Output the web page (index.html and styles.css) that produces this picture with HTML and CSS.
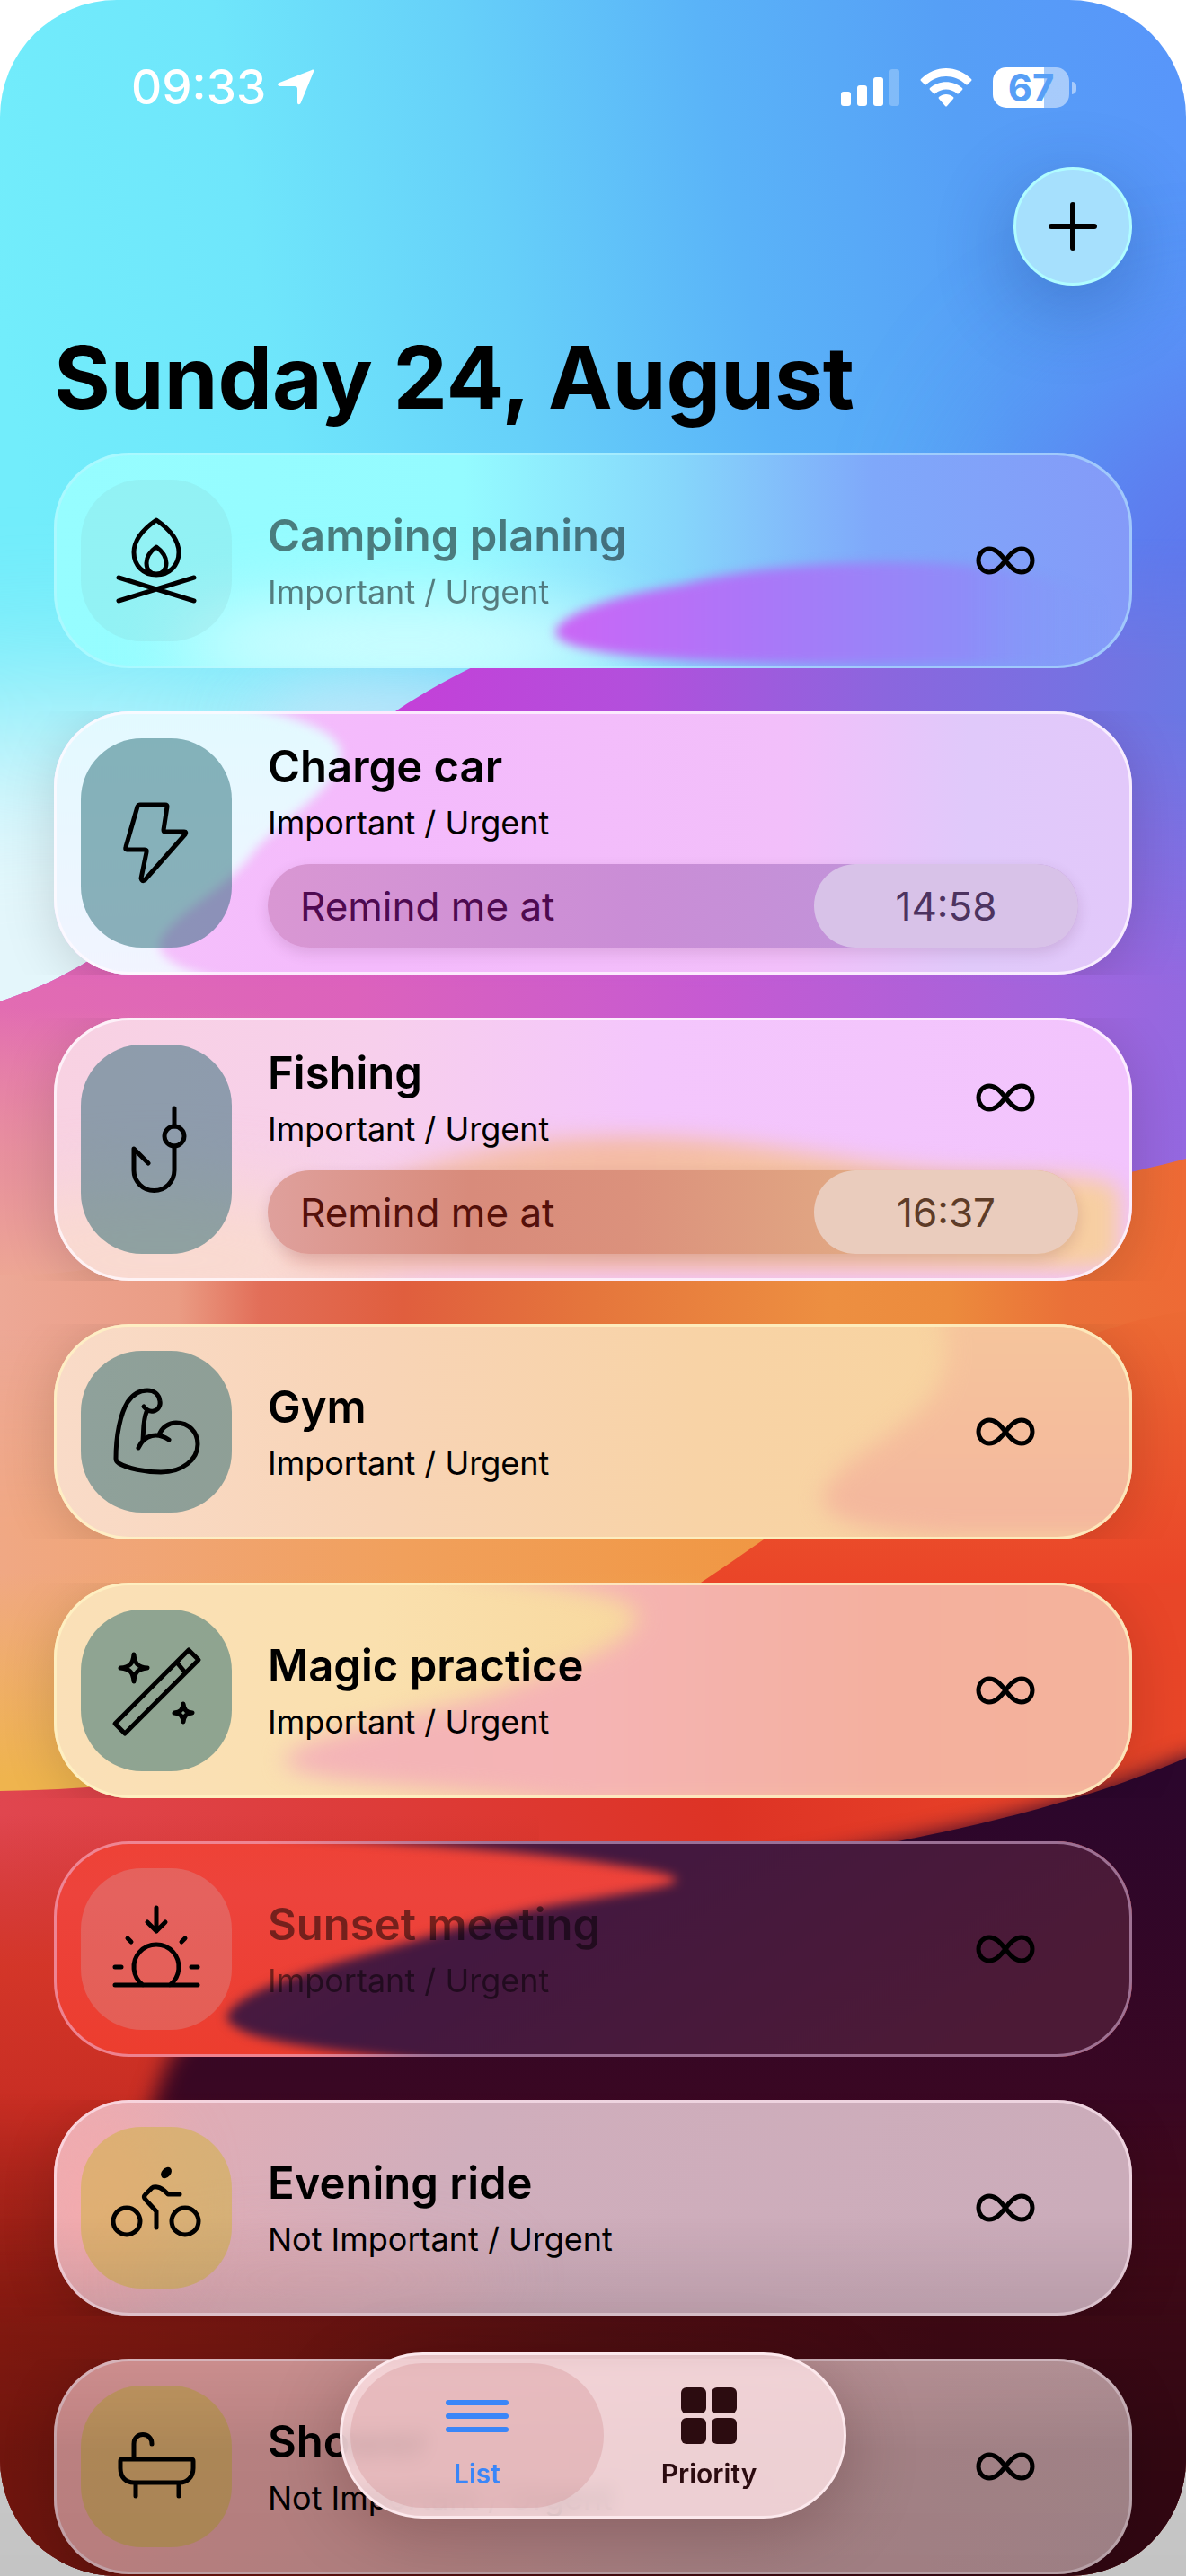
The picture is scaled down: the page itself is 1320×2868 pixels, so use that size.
FILE: index.html
```html
<!DOCTYPE html>
<html lang="en">
<head>
<meta charset="utf-8">
<meta name="viewport" content="width=device-width, initial-scale=1">
<title>Sunday 24, August</title>
<link rel="stylesheet" href="styles.css">
</head>
<body>
<svg width="0" height="0" class="defs" aria-hidden="true">
  <defs>
    <symbol id="infinity" viewBox="0 0 66 32">
      <path d="M33 16C27 8 22 3 15 3C8 3 3 9 3 16S8 29 15 29C22 29 27 24 33 16S44 3 51 3C58 3 63 9 63 16S58 29 51 29C44 29 39 24 33 16Z"/>
    </symbol>
    <filter id="soft" x="-20%" y="-40%" width="140%" height="180%" color-interpolation-filters="sRGB"><feGaussianBlur stdDeviation="6"/></filter>
    <filter id="softer" x="-20%" y="-40%" width="140%" height="180%" color-interpolation-filters="sRGB"><feGaussianBlur stdDeviation="12"/></filter>
    <filter id="haze" x="-100%" y="-200%" width="300%" height="500%" color-interpolation-filters="sRGB"><feGaussianBlur stdDeviation="40"/></filter>
    <filter id="mist" x="-100%" y="-100%" width="300%" height="300%" color-interpolation-filters="sRGB"><feGaussianBlur stdDeviation="100"/></filter>
  </defs>
</svg>

<div class="screen">
  <svg class="wallpaper" viewBox="0 0 1320 2868" preserveAspectRatio="none" aria-hidden="true">
    <defs>
      <linearGradient id="sky" gradientUnits="userSpaceOnUse" x1="0" y1="380" x2="1320" y2="160">
        <stop offset="0" stop-color="#72edfb"/><stop offset=".22" stop-color="#6fe6fb"/><stop offset=".42" stop-color="#66d0f9"/>
        <stop offset=".62" stop-color="#5ab3f8"/><stop offset=".82" stop-color="#569ff6"/><stop offset="1" stop-color="#5896fa"/>
      </linearGradient>
      <linearGradient id="wave1" gradientUnits="userSpaceOnUse" x1="440" y1="760" x2="1320" y2="760">
        <stop offset="0" stop-color="#c440d8"/><stop offset=".3" stop-color="#b34fdc"/><stop offset=".62" stop-color="#8b66de"/><stop offset="1" stop-color="#6a78e4"/>
      </linearGradient>
      <linearGradient id="wave1low" gradientUnits="userSpaceOnUse" x1="0" y1="1100" x2="1320" y2="1100">
        <stop offset="0" stop-color="#e26cb2"/><stop offset=".3" stop-color="#dc62bc"/><stop offset=".6" stop-color="#c65ad2"/><stop offset="1" stop-color="#9468e0"/>
      </linearGradient>
      <linearGradient id="fadeIn1" gradientUnits="userSpaceOnUse" x1="0" y1="790" x2="0" y2="1100">
        <stop offset="0" stop-color="#000"/><stop offset="1" stop-color="#fff"/>
      </linearGradient>
      <mask id="m1"><rect width="1320" height="2868" fill="url(#fadeIn1)"/></mask>
      <linearGradient id="fadeTop" gradientUnits="userSpaceOnUse" x1="0" y1="600" x2="0" y2="735">
        <stop offset="0" stop-color="#000"/><stop offset="1" stop-color="#fff"/>
      </linearGradient>
      <mask id="m0"><rect width="1320" height="2868" fill="url(#fadeTop)"/></mask>
      <linearGradient id="peach" gradientUnits="userSpaceOnUse" x1="0" y1="1120" x2="0" y2="1420">
        <stop offset="0" stop-color="#eda694" stop-opacity="0"/><stop offset=".6" stop-color="#e8969a" stop-opacity=".9"/><stop offset="1" stop-color="#eda694"/>
      </linearGradient>
      <linearGradient id="wave2" gradientUnits="userSpaceOnUse" x1="0" y1="1450" x2="1320" y2="1450">
        <stop offset="0" stop-color="#eda896"/><stop offset=".15" stop-color="#ea9c84"/><stop offset=".22" stop-color="#e26e58"/><stop offset=".34" stop-color="#e05e3e"/>
        <stop offset=".5" stop-color="#e5763c"/><stop offset=".7" stop-color="#ed8f41"/><stop offset=".8" stop-color="#ec8b3d"/><stop offset=".9" stop-color="#ea7038"/><stop offset="1" stop-color="#ee6a35"/>
      </linearGradient>
      <linearGradient id="wave2low" gradientUnits="userSpaceOnUse" x1="0" y1="1740" x2="900" y2="1740">
        <stop offset="0" stop-color="#f0a884"/><stop offset=".5" stop-color="#f1a05c"/><stop offset="1" stop-color="#f09640"/>
      </linearGradient>
      <linearGradient id="fadeIn2" gradientUnits="userSpaceOnUse" x1="0" y1="1480" x2="0" y2="1700">
        <stop offset="0" stop-color="#000"/><stop offset="1" stop-color="#fff"/>
      </linearGradient>
      <mask id="m2"><rect width="1320" height="2868" fill="url(#fadeIn2)"/></mask>
      <linearGradient id="gold" gradientUnits="userSpaceOnUse" x1="0" y1="1750" x2="0" y2="1980">
        <stop offset="0" stop-color="#efb44e" stop-opacity="0"/><stop offset="1" stop-color="#efb44e"/>
      </linearGradient>
      <linearGradient id="red" gradientUnits="userSpaceOnUse" x1="0" y1="2020" x2="1320" y2="1850">
        <stop offset="0" stop-color="#e0464f"/><stop offset=".3" stop-color="#dd3c3a"/><stop offset=".6" stop-color="#dd3325"/><stop offset=".85" stop-color="#e84228"/><stop offset="1" stop-color="#e84628"/>
      </linearGradient>
      <linearGradient id="redEdge" gradientUnits="userSpaceOnUse" x1="0" y1="1460" x2="0" y2="1760">
        <stop offset="0" stop-color="#ec6a34"/><stop offset="1" stop-color="#ea4528"/>
      </linearGradient>
      <linearGradient id="redlow" gradientUnits="userSpaceOnUse" x1="0" y1="2020" x2="0" y2="2868">
        <stop offset="0" stop-color="#c42c20" stop-opacity="0"/><stop offset=".2" stop-color="#d23424"/><stop offset=".4" stop-color="#c42a1e"/><stop offset=".7" stop-color="#901c12"/><stop offset="1" stop-color="#8c1c12"/>
      </linearGradient>
      <linearGradient id="night" gradientUnits="userSpaceOnUse" x1="0" y1="1980" x2="0" y2="2600">
        <stop offset="0" stop-color="#2b062c"/><stop offset=".6" stop-color="#3a0722"/><stop offset="1" stop-color="#420a18"/>
      </linearGradient>
      <linearGradient id="ember" gradientUnits="userSpaceOnUse" x1="0" y1="2600" x2="1320" y2="2600">
        <stop offset="0" stop-color="#901c12"/><stop offset=".2" stop-color="#7c1812"/><stop offset=".5" stop-color="#581014"/><stop offset=".8" stop-color="#420a16"/><stop offset="1" stop-color="#400a18"/>
      </linearGradient>
      <linearGradient id="fadeIn3" gradientUnits="userSpaceOnUse" x1="0" y1="2330" x2="0" y2="2590">
        <stop offset="0" stop-color="#000"/><stop offset="1" stop-color="#fff"/>
      </linearGradient>
      <mask id="m3"><rect width="1320" height="2868" fill="url(#fadeIn3)"/></mask>
    </defs>
    <rect width="1320" height="1400" fill="url(#sky)"/>
    <ellipse cx="1380" cy="660" rx="240" ry="230" fill="#5f76ec" filter="url(#mist)"/>
    <ellipse cx="80" cy="1120" rx="600" ry="320" fill="#e4f6fb" filter="url(#mist)"/>
    <ellipse cx="440" cy="810" rx="160" ry="60" fill="#c8e4fa" opacity=".8" filter="url(#haze)"/>
    <path d="M0 1115C70 1092 120 1060 180 1010C290 915 360 845 440 792C500 752 540 736 620 700C660 680 700 640 760 600H1320V1500H0Z" fill="url(#wave1)" mask="url(#m0)"/>
    <path d="M0 1115C70 1092 120 1060 180 1010C290 915 360 845 440 792C500 752 540 736 620 700C660 680 700 640 760 600H1320V1500H0Z" fill="url(#wave1low)" mask="url(#m1)"/>
    <rect y="1120" width="300" height="340" fill="url(#peach)"/>
    <path d="M0 1420C200 1420 300 1340 600 1330C900 1330 1100 1350 1320 1290V2100H0Z" fill="url(#wave2)"/>
    <rect y="1470" width="1320" height="600" fill="url(#wave2low)" mask="url(#m2)"/>
    <rect y="1740" width="900" height="300" fill="url(#gold)"/>
    <path d="M780 1762C810 1742 830 1728 850 1714C970 1620 1150 1480 1320 1460V1800H780Z" fill="url(#redEdge)"/>
    <path d="M0 1994C200 1990 400 1960 560 1890C650 1850 710 1812 780 1762H1320V2868H0Z" fill="url(#red)"/>
    <rect y="2020" width="600" height="848" fill="url(#redlow)" opacity=".9"/>
    <path d="M1320 1957C1240 1992 1140 2022 1000 2050C700 2110 240 2200 190 2290C170 2330 130 2450 60 2868H1400V1940Z" fill="url(#night)" filter="url(#softer)"/>
    <path d="M1320 1957C1240 1992 1140 2022 1000 2050C900 2070 800 2092 700 2120C500 2180 380 2230 400 2400H1320Z" fill="url(#night)"/>
    <rect y="2330" width="1320" height="538" fill="url(#ember)" mask="url(#m3)"/>
  </svg>

  <header class="status">
    <span class="clock">09:33</span>
    <svg class="location" viewBox="0 0 42 40" aria-label="Location in use"><path d="M39 1C41 0 42 1 41 3L27 37C26 40 23 40 23 37V22C23 20 22 19 20 19H4C1 19 0 16 3 15Z"/></svg>
    <svg class="signal" viewBox="0 0 65 42" aria-label="Signal">
      <rect x="0" y="26" width="11" height="16" rx="3"/><rect x="18" y="19" width="11" height="23" rx="3"/>
      <rect x="36" y="10" width="11" height="32" rx="3"/><rect x="54" y="1" width="11" height="41" rx="3" opacity=".25"/>
    </svg>
    <svg class="wifi" viewBox="0 0 58 43" aria-label="Wi-Fi">
      <path d="M1 12C17-4 41-4 57 12Q58 13 57 14L53 18Q52 19 51 18C38 6 20 6 7 18Q6 19 5 18L1 14Q0 13 1 12Z"/>
      <path d="M11 22C21 13 37 13 47 22Q48 23 47 24L43 28Q42 29 41 28C34 22 24 22 17 28Q16 29 15 28L11 24Q10 23 11 22Z"/>
      <path d="M21 32C26 28 32 28 37 32Q38 33 37 34L30 42Q29 43 28 42L21 34Q20 33 21 32Z"/>
    </svg>
    <span class="battery"><span class="level">67</span></span>
  </header>

  <div class="toolbar">
    <button class="add" type="button" aria-label="Add task">
      <svg viewBox="0 0 54 54" aria-hidden="true"><path d="M27 3V51M3 27H51"/></svg>
    </button>
  </div>

  <main>
    <h1>Sunday 24, August</h1>
    <ul class="tasks">
      <li class="row">
        <article class="card rim-cyan done">
          <svg class="glass" viewBox="0 0 1200 240" preserveAspectRatio="none" aria-hidden="true">
            <defs>
              <linearGradient id="g1"><stop offset="0" stop-color="#96fdff"/><stop offset=".38" stop-color="#94fbff"/><stop offset=".58" stop-color="#86d6fb"/><stop offset=".76" stop-color="#7fa8fa"/><stop offset="1" stop-color="#849af8"/></linearGradient>
              <linearGradient id="p1"><stop offset="0" stop-color="#cb66f6"/><stop offset=".35" stop-color="#ac76f8"/><stop offset=".75" stop-color="#8e8cf8"/><stop offset="1" stop-color="#8498f8" stop-opacity="0"/></linearGradient>
            </defs>
            <rect width="1200" height="240" fill="url(#g1)"/>
            <ellipse cx="390" cy="215" rx="260" ry="50" fill="#d2fdff" filter="url(#haze)"/>
            <path d="M558 200C563 180 620 160 698 147C760 130 850 122 940 122C1050 122 1130 140 1170 170V236H850C720 234 563 228 558 200Z" fill="url(#p1)" filter="url(#soft)"/>
          </svg>
          <span class="tile tile-clear"><svg class="icon" viewBox="0 0 120 120" aria-hidden="true"><path d="M60 15C47 24 35 37 35 51C35 66 46 76 60 76S85 66 85 51C85 37 73 24 60 15ZM60 45C53 50 49 56 49 63C49 71 54 75 60 75S71 71 71 63C71 56 67 50 60 45ZM18 79L102 105M102 79L18 105"/></svg></span>
          <div class="body">
            <div class="head"><div class="text"><h2>Camping planing</h2><p>Important / Urgent</p></div><svg class="repeat" role="img" aria-label="Repeats"><use href="#infinity"/></svg></div>
          </div>
        </article>
      </li>
      <li class="row">
        <article class="card rim-white">
          <svg class="glass" viewBox="0 0 1200 293" preserveAspectRatio="none" aria-hidden="true">
            <defs>
              <linearGradient id="g2"><stop offset="0" stop-color="#f5c2fb"/><stop offset=".3" stop-color="#f4bafc"/><stop offset=".68" stop-color="#f2bffa"/><stop offset=".85" stop-color="#e0c9fa"/><stop offset="1" stop-color="#e2c8fa"/></linearGradient>
              <linearGradient id="q2" x2="0" y2="1"><stop offset="0" stop-color="#e2faff"/><stop offset="1" stop-color="#f2f4ff"/></linearGradient>
            </defs>
            <rect width="1200" height="293" fill="url(#g2)"/>
            <path d="M-30 -10H190C260 2 318 20 320 47C316 90 250 120 220 160C190 200 125 230 117 260C120 280 150 290 190 300H-30Z" fill="url(#q2)" filter="url(#soft)"/>
          </svg>
          <span class="tile tile-teal"><svg class="icon" viewBox="0 0 120 120" aria-hidden="true"><path d="M42 17H70Q72 17 72 19L68 45Q68 47 70 47H91Q94 47 92 50L47 101Q44 103 43 99L49 70Q50 67 47 67H27Q25 67 26 64L39 19Q40 17 42 17Z"/></svg></span>
          <div class="body">
            <div class="head"><div class="text"><h2>Charge car</h2><p>Important / Urgent</p></div></div>
            <div class="remind remind-violet"><label for="t1">Remind me at</label><input id="t1" type="text" value="14:58"></div>
          </div>
        </article>
      </li>
      <li class="row">
        <article class="card rim-white">
          <svg class="glass" viewBox="0 0 1200 293" preserveAspectRatio="none" aria-hidden="true">
            <defs>
              <linearGradient id="g3"><stop offset="0" stop-color="#f8d2e2"/><stop offset=".3" stop-color="#f7cfec"/><stop offset=".55" stop-color="#f4c6fc"/><stop offset="1" stop-color="#f2c4fd"/></linearGradient>
              <linearGradient id="q3"><stop offset="0" stop-color="#f5c2b6"/><stop offset=".4" stop-color="#f4bba4"/><stop offset="1" stop-color="#f7cfa2"/></linearGradient>
            </defs>
            <rect width="1200" height="293" fill="url(#g3)"/>
            <ellipse cx="120" cy="270" rx="260" ry="80" fill="#f9dad0" filter="url(#haze)"/>
            <path d="M260 255C300 200 430 140 600 134C760 126 880 165 1000 172C1100 176 1180 172 1186 195V270Q1180 282 1100 282H380C300 282 240 275 260 255Z" fill="url(#q3)" filter="url(#softer)"/>
          </svg>
          <span class="tile tile-teal"><svg class="icon" viewBox="0 0 120 120" aria-hidden="true"><path d="M80 14V34M80 56V83A22 22 0 0 1 35 83V59L51 75"/><circle cx="80" cy="45" r="11"/></svg></span>
          <div class="body">
            <div class="head"><div class="text"><h2>Fishing</h2><p>Important / Urgent</p></div><svg class="repeat" role="img" aria-label="Repeats"><use href="#infinity"/></svg></div>
            <div class="remind remind-clay"><label for="t2">Remind me at</label><input id="t2" type="text" value="16:37"></div>
          </div>
        </article>
      </li>
      <li class="row">
        <article class="card rim-cream">
          <svg class="glass" viewBox="0 0 1200 240" preserveAspectRatio="none" aria-hidden="true">
            <defs>
              <linearGradient id="g4"><stop offset="0" stop-color="#f9dbc8"/><stop offset=".3" stop-color="#f8d4b6"/><stop offset=".6" stop-color="#f8d3a6"/><stop offset="1" stop-color="#f8d49c"/></linearGradient>
              <linearGradient id="q4" x2="0" y2="1"><stop offset="0" stop-color="#f6c69c"/><stop offset=".5" stop-color="#f5be9c"/><stop offset="1" stop-color="#f4b69e"/></linearGradient>
            </defs>
            <rect width="1200" height="240" fill="url(#g4)"/>
            <path d="M984 -20C1000 30 1000 70 950 107C910 140 850 170 856 201C870 226 940 232 992 236H1230V-20Z" fill="url(#q4)" filter="url(#softer)"/>
          </svg>
          <span class="tile tile-teal"><svg class="icon" viewBox="0 0 120 120" aria-hidden="true"><path d="M46 32C50 37 53 38 57 37C62 36 65 31 64 26C63 18 57 14 50 14C41 14 34 18 28 27C20 40 15 64 15 90Q15 93 18 95C28 101 48 105 65 105C89 105 106 91 106 74C106 60 96 50 82 50C74 50 66 55 63 64M49 38C45 48 46 58 45 69M40 78C47 62 62 61 74 69"/></svg></span>
          <div class="body">
            <div class="head"><div class="text"><h2>Gym</h2><p>Important / Urgent</p></div><svg class="repeat" role="img" aria-label="Repeats"><use href="#infinity"/></svg></div>
          </div>
        </article>
      </li>
      <li class="row">
        <article class="card rim-cream">
          <svg class="glass" viewBox="0 0 1200 240" preserveAspectRatio="none" aria-hidden="true">
            <defs>
              <linearGradient id="g5"><stop offset="0" stop-color="#fae0b8"/><stop offset=".3" stop-color="#fae0ae"/><stop offset=".55" stop-color="#f8d89e"/></linearGradient>
              <linearGradient id="q5"><stop offset="0" stop-color="#f4b4b8"/><stop offset=".35" stop-color="#f5b4b4"/><stop offset=".7" stop-color="#f4b09e"/><stop offset="1" stop-color="#f4b39a"/></linearGradient>
            </defs>
            <rect width="1200" height="240" fill="url(#g5)"/>
            <path d="M400 -30C440 -6 640 0 652 38C630 80 560 95 500 120C430 145 260 170 256 200C280 228 450 226 590 250H1230V-30Z" fill="url(#q5)" filter="url(#softer)"/>
          </svg>
          <span class="tile tile-teal"><svg class="icon" viewBox="0 0 120 120" aria-hidden="true"><path d="M96 15L107 26L25 108L14 97ZM83 29L92 40M35 20C36 30 39 34 50 35C39 36 36 40 35 50C34 40 31 36 20 35C31 34 34 30 35 20ZM90 75C91 82 93 84 100 85C93 86 91 88 90 95C89 88 87 86 80 85C87 84 89 82 90 75Z"/></svg></span>
          <div class="body">
            <div class="head"><div class="text"><h2>Magic practice</h2><p>Important / Urgent</p></div><svg class="repeat" role="img" aria-label="Repeats"><use href="#infinity"/></svg></div>
          </div>
        </article>
      </li>
      <li class="row">
        <article class="card rim-faint done">
          <svg class="glass" viewBox="0 0 1200 240" preserveAspectRatio="none" aria-hidden="true">
            <defs>
              <linearGradient id="g6" x2="0" y2="1"><stop offset="0" stop-color="#ee4236"/><stop offset=".25" stop-color="#ed433c"/><stop offset="1" stop-color="#ec3d2e"/></linearGradient>
              <linearGradient id="q6" x2="1" y2=".4"><stop offset="0" stop-color="#521c3e"/><stop offset=".4" stop-color="#431840"/><stop offset="1" stop-color="#4c1a36"/></linearGradient>
            </defs>
            <rect width="1200" height="240" fill="url(#g6)"/>
            <path d="M240 -8C340 0 520 8 623 26C750 44 680 50 600 64C520 76 460 92 403 110C330 132 206 160 192 196C206 228 330 232 440 250H1230V-20Z" fill="url(#q6)" filter="url(#soft)"/>
          </svg>
          <span class="tile tile-mist"><svg class="icon" viewBox="0 0 120 120" aria-hidden="true"><path d="M60 14V40M50 30L60 40L70 30M28 48L32 52M92 48L88 52M14 80H21M99 80H106M14 100H106M45 100A25 25 0 1 1 75 100"/></svg></span>
          <div class="body">
            <div class="head"><div class="text"><h2>Sunset meeting</h2><p>Important / Urgent</p></div><svg class="repeat" role="img" aria-label="Repeats"><use href="#infinity"/></svg></div>
          </div>
        </article>
      </li>
      <li class="row">
        <article class="card rim-pink">
          <svg class="glass" viewBox="0 0 1200 240" preserveAspectRatio="none" aria-hidden="true">
            <defs>
              <linearGradient id="g7" x2="1" y2=".1"><stop offset="0" stop-color="#f0acb0"/><stop offset=".14" stop-color="#e0adb6"/><stop offset=".4" stop-color="#d0aebc"/><stop offset="1" stop-color="#cbacba"/></linearGradient>
            </defs>
            <rect width="1200" height="240" fill="url(#g7)"/>
            <ellipse cx="60" cy="120" rx="60" ry="90" fill="#f6aaac" filter="url(#haze)"/>
            <ellipse cx="300" cy="200" rx="200" ry="30" fill="#e6aab0" opacity=".7" filter="url(#haze)"/>
          </svg>
          <span class="tile tile-gold"><svg class="icon" viewBox="0 0 120 120" aria-hidden="true"><circle cx="27" cy="75" r="15"/><circle cx="92" cy="75" r="15"/><path d="M60 82V64L48 51Q45 48 48 45L55 38Q57 36 61 37C67 38 69 41 73 45H86"/><ellipse class="solid" cx="71" cy="21" rx="5" ry="7" transform="rotate(42 71 21)"/></svg></span>
          <div class="body">
            <div class="head"><div class="text"><h2>Evening ride</h2><p>Not Important / Urgent</p></div><svg class="repeat" role="img" aria-label="Repeats"><use href="#infinity"/></svg></div>
          </div>
        </article>
      </li>
      <li class="row">
        <article class="card rim-pink">
          <svg class="glass" viewBox="0 0 1200 240" preserveAspectRatio="none" aria-hidden="true">
            <defs>
              <linearGradient id="g8"><stop offset="0" stop-color="#f0a4a4"/><stop offset=".3" stop-color="#e4a4a4"/><stop offset=".6" stop-color="#d4a4a8"/><stop offset="1" stop-color="#cca6ac"/></linearGradient>
            </defs>
            <rect width="1200" height="240" fill="url(#g8)"/>
          </svg>
          <span class="tile tile-gold"><svg class="icon" viewBox="0 0 120 120" aria-hidden="true"><path d="M35 51V35C35 21 55 21 55 35M22 52H99Q101 52 101 54V62C101 72 94 78 86 78H35C26 78 20 72 20 62V54Q20 52 22 52ZM37 79V93M85 79V93"/></svg></span>
          <div class="body">
            <div class="head"><div class="text"><h2>Shower</h2><p>Not Important / Urgent</p></div><svg class="repeat" role="img" aria-label="Repeats"><use href="#infinity"/></svg></div>
          </div>
        </article>
      </li>
    </ul>
  </main>
</div>

<div class="dim"></div>
<nav class="tabs" aria-label="Views">
  <a class="tab current" href="#list" aria-current="page">
    <svg viewBox="0 0 70 64" aria-hidden="true"><path class="line" d="M3 17H67M3 32H67M3 47H67"/></svg>
    <span>List</span>
  </a>
  <a class="tab" href="#priority">
    <svg viewBox="0 0 70 64" aria-hidden="true"><rect x="4" y="0" width="28" height="29" rx="6"/><rect x="38" y="0" width="28" height="29" rx="6"/><rect x="4" y="34" width="28" height="29" rx="6"/><rect x="38" y="34" width="28" height="29" rx="6"/></svg>
    <span>Priority</span>
  </a>
</nav>
</body>
</html>
```
FILE: styles.css
```css
* {
  box-sizing: border-box;
}

body {
  margin: 0;
  background: #fff;
  color: #000;
  font-family: Inter, "Liberation Sans", sans-serif;
}

.defs {
  position: absolute;
}

.screen {
  position: relative;
  min-height: 100vh;
  padding-bottom: 2px;
  border-radius: 130px;
  overflow: hidden;
  isolation: isolate;
}

.wallpaper {
  position: absolute;
  inset: 0;
  width: 100%;
  height: 100%;
  z-index: -1;
}

/* Status bar */
.status {
  display: flex;
  align-items: center;
  height: 128px;
  padding: 66px 122px 0 146px;
  color: #fff;
}

.status svg {
  fill: #fff;
}

.clock {
  font-size: 53px;
  font-weight: 500;
  line-height: 60px;
}

.location {
  width: 42px;
  height: 40px;
  margin-left: 12px;
}

.signal {
  width: 65px;
  height: 42px;
  margin-left: auto;
}

.wifi {
  width: 58px;
  height: 43px;
  margin: 0 23px;
}

.battery {
  position: relative;
  width: 85px;
  height: 45px;
  margin-right: 8px;
  border-radius: 15px;
  background: linear-gradient(90deg, #fff 67%, rgba(255, 255, 255, .48) 67%);
}

.battery::after {
  content: "";
  position: absolute;
  left: 88px;
  top: 16px;
  width: 5px;
  height: 14px;
  border-radius: 0 5px 5px 0;
  background: rgba(255, 255, 255, .48);
}

.level {
  display: block;
  color: #589ff6;
  font-size: 42px;
  font-weight: 700;
  line-height: 45px;
  text-align: center;
}

/* Toolbar */
.toolbar {
  display: flex;
  justify-content: flex-end;
  padding: 58px 60px 0;
}

.add {
  display: grid;
  place-items: center;
  width: 132px;
  height: 132px;
  padding: 0;
  border: 3px solid #b0fcff;
  border-radius: 50%;
  background: #a6e0fd;
  box-shadow: 0 24px 90px rgba(20, 40, 110, .32);
}

.add svg {
  width: 54px;
  height: 54px;
  stroke: #000;
  stroke-width: 6;
  stroke-linecap: round;
}

h1 {
  margin: 44px 60px 26px;
  font-size: 96px;
  font-weight: 700;
  line-height: 116px;
}

/* Task list */
.tasks {
  display: flex;
  flex-direction: column;
  gap: 48px;
  margin: 0;
  padding: 0;
  list-style: none;
}

.row {
  padding: 0 60px;
  overflow: hidden;
}

.card {
  position: relative;
  display: flex;
  gap: 40px;
  padding: 30px 60px 30px 30px;
  border-radius: 84px;
  box-shadow: 0 10px 60px rgba(0, 0, 0, .15);
  isolation: isolate;
}

.card::after {
  content: "";
  position: absolute;
  inset: 0;
  border: 3px solid var(--rim);
  border-radius: inherit;
  pointer-events: none;
}

.done {
  box-shadow: none;
}

.rim-cyan { --rim: rgba(190, 245, 255, .5); }
.rim-white { --rim: rgba(255, 250, 255, .75); }
.rim-cream { --rim: rgba(255, 244, 196, .75); }
.rim-faint { --rim: rgba(240, 200, 240, .5); }
.rim-pink { --rim: rgba(255, 232, 242, .65); }

.glass {
  position: absolute;
  inset: 0;
  width: 100%;
  height: 100%;
  border-radius: inherit;
  z-index: -1;
}

.tile {
  display: grid;
  place-items: center;
  flex: none;
  width: 168px;
  min-height: 180px;
  border-radius: 68px;
}

.tile-clear { background: rgba(128, 180, 180, .14); }
.tile-teal { background: rgba(14, 92, 103, .45); }
.tile-mist { background: rgba(200, 210, 220, .22); }
.tile-gold { background: rgba(210, 178, 76, .6); }

.icon {
  width: 120px;
  height: 120px;
  fill: none;
  stroke: #000;
  stroke-width: 5;
  stroke-linecap: round;
  stroke-linejoin: round;
}

.icon .solid {
  fill: #000;
  stroke: none;
}

.body {
  display: flex;
  flex: 1;
  flex-direction: column;
  justify-content: center;
  gap: 22px;
}

.head {
  display: flex;
  align-items: center;
  justify-content: space-between;
  padding-right: 48px;
}

.text {
  display: flex;
  flex-direction: column;
  gap: 8px;
  padding-top: 2px;
}

h2,
.text p {
  margin: 0;
}

h2 {
  font-size: 49px;
  font-weight: 600;
  line-height: 60px;
}

.text p {
  font-size: 36px;
  line-height: 48px;
}

.done .text {
  opacity: .5;
}

.repeat {
  width: 66px;
  height: 32px;
  fill: none;
  stroke: #000;
  stroke-width: 5;
}

.remind {
  display: flex;
  align-items: center;
  justify-content: space-between;
  height: 93px;
  padding-left: 36px;
  border-radius: 47px;
  box-shadow: 0 6px 16px rgba(80, 20, 60, .14);
  font-size: 44px;
}

.remind input {
  width: 294px;
  height: 93px;
  padding: 0;
  border: 0;
  border-radius: 47px;
  font: inherit;
  text-align: center;
}

.remind-violet {
  background: linear-gradient(90deg, #d997d3, #ca8dd6 45%, #c094da 80%);
  color: #4e0a50;
}

.remind-violet input {
  background: #d8c2e8;
  color: #4d3360;
}

.remind-clay {
  background: linear-gradient(90deg, #dfa09c, #d88b7b 25%, #db917c 45%, #e2aa84 75%);
  color: #54100a;
}

.remind-clay input {
  background: #eaccbd;
  color: #5e3c28;
}

/* Bottom tab bar */
.dim {
  position: fixed;
  inset: auto 0 0;
  height: 400px;
  background: linear-gradient(rgba(0, 0, 0, 0), rgba(0, 0, 0, .22) 65%, rgba(0, 0, 0, .23));
  pointer-events: none;
}

.tabs {
  position: fixed;
  bottom: 64px;
  left: 50%;
  display: flex;
  padding: 9px;
  border: 3px solid #fce8ec;
  border-radius: 93px;
  background: rgba(255, 228, 231, .8);
  box-shadow: 0 16px 80px rgba(40, 0, 0, .25);
  backdrop-filter: blur(10px);
  transform: translateX(-50%);
}

.tab {
  display: flex;
  flex-direction: column;
  align-items: center;
  gap: 12px;
  width: 282px;
  height: 161px;
  padding-top: 27px;
  border-radius: 81px;
  color: #2c0c10;
  font-size: 30px;
  font-weight: 600;
  line-height: 40px;
  text-decoration: none;
}

.tab + .tab {
  margin-left: -24px;
}

.tab svg {
  width: 70px;
  height: 64px;
  fill: currentColor;
}

.tab .line {
  stroke: currentColor;
  stroke-width: 6;
  stroke-linecap: round;
}

.current {
  background: rgba(200, 120, 125, .25);
  color: #3a86f8;
}
```
